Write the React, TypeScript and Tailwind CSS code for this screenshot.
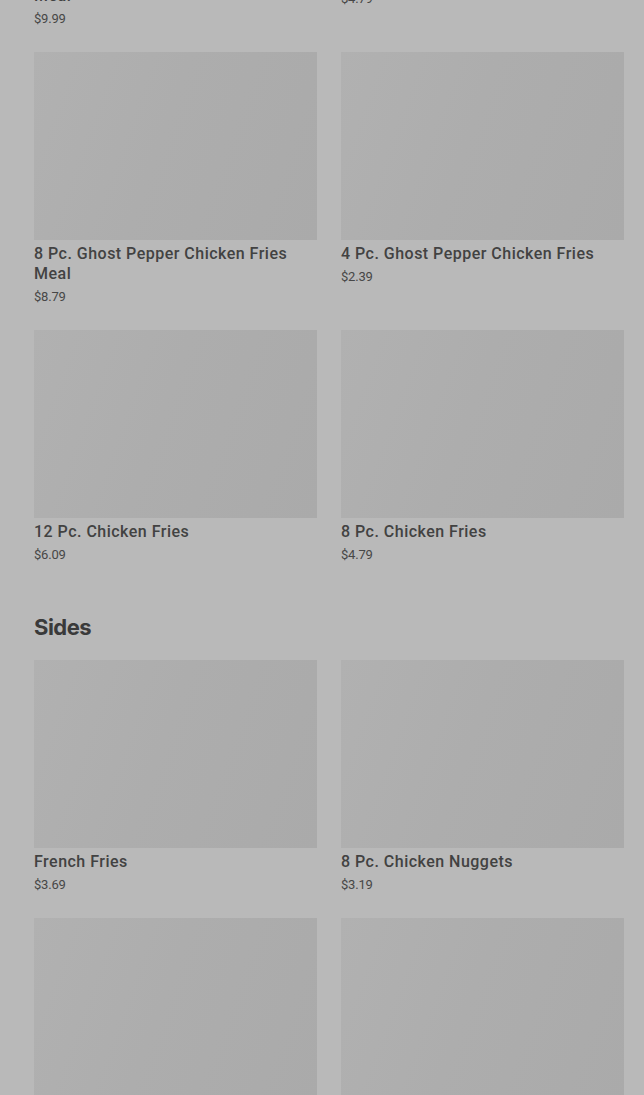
import React from 'react';

interface MenuItem {
    name: string;
    price: string;
}

const chickenFries: MenuItem[] = [
    { name: '12 Pc. Ghost Pepper Chicken Fries Meal', price: '$9.99' },
    { name: 'Chicken Fries Meal', price: '$4.79' },
    { name: '8 Pc. Ghost Pepper Chicken Fries Meal', price: '$8.79' },
    { name: '4 Pc. Ghost Pepper Chicken Fries', price: '$2.39' },
    { name: '12 Pc. Chicken Fries', price: '$6.09' },
    { name: '8 Pc. Chicken Fries', price: '$4.79' },
];

const sides: MenuItem[] = [
    { name: 'French Fries', price: '$3.69' },
    { name: '8 Pc. Chicken Nuggets', price: '$3.19' },
    { name: 'Onion Rings', price: '$3.49' },
    { name: 'Mozzarella Sticks', price: '$2.99' },
];

const ItemCard = ({ item }: { item: MenuItem }) => (
    <div className="flex flex-col">
        <div className="h-[188px] w-full bg-[linear-gradient(110deg,#b1b1b1_0%,#adadad_45%,#aaaaaa_100%)]" />
        <p className="mt-[4px] text-[16px] leading-[20px] font-medium tracking-[0.48px] text-[#424242]">{item.name}</p>
        <p className="mt-[4px] text-[13px] leading-[18px] tracking-[-0.2px] text-[#474747]">{item.price}</p>
    </div>
);

const App = () => {
    return (
        <div className="min-h-screen overflow-hidden bg-[#b9b9b9] font-['Roboto',sans-serif]">
            <div className="mt-[-226px] pl-[34px] pr-[20px] pb-10">
                <div className="grid grid-cols-2 gap-x-6 gap-y-[24px]">
                    {chickenFries.map((item, i) => (
                        <ItemCard key={i} item={item} />
                    ))}
                </div>
                <h2 className="mt-[47px] mb-[17px] text-[22px] leading-[32px] font-bold tracking-[-0.5px] text-[#3a3a3a] font-['Inter',sans-serif]">
                    Sides
                </h2>
                <div className="grid grid-cols-2 gap-x-6 gap-y-[24px]">
                    {sides.map((item, i) => (
                        <ItemCard key={i} item={item} />
                    ))}
                </div>
            </div>
        </div>
    );
};

export default App;
